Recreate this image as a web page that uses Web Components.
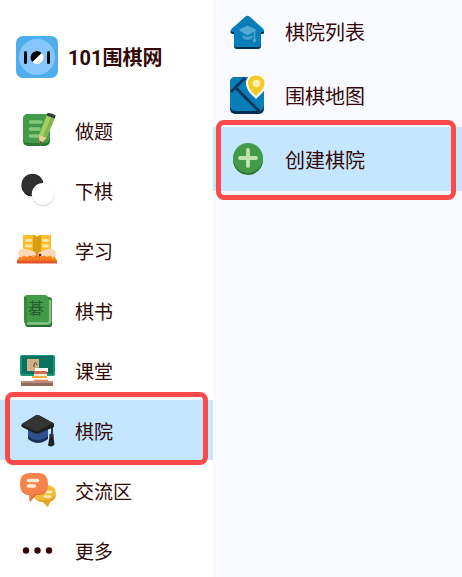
<!DOCTYPE html>
<html lang="zh-CN">
<head>
<meta charset="utf-8">
<meta name="viewport" content="width=device-width, initial-scale=1">
<title>101围棋网</title>
<style>
html, body { margin: 0; min-height: 100%; }
body { font-family: "Noto Sans CJK SC", sans-serif; color: #320808; background: #f9faff; overflow: hidden; }
</style>
</head>
<body>
<go-shell>
  <go-brand slot="side"></go-brand>
  <go-menu slot="side" label="主菜单">
    <go-item icon="practice">做题</go-item>
    <go-item icon="play">下棋</go-item>
    <go-item icon="study">学习</go-item>
    <go-item icon="book">棋书</go-item>
    <go-item icon="class">课堂</go-item>
    <go-item icon="academy" active>棋院</go-item>
    <go-item icon="chat">交流区</go-item>
    <go-item icon="more">更多</go-item>
  </go-menu>
  <go-menu class="sub" label="棋院" large>
    <go-item icon="house" large>棋院列表</go-item>
    <go-item icon="map" large>围棋地图</go-item>
    <go-item icon="add" large active>创建棋院</go-item>
  </go-menu>
</go-shell>

<script>
const icons = {
  logo: `<rect width="42" height="42" rx="7" fill="#4eaeed"/><circle cx="21" cy="21" r="18" fill="#86c6fa"/><rect x="8" y="15" width="3" height="13" rx="1.5" fill="#050505"/><rect x="31" y="15" width="3" height="13" rx="1.5" fill="#050505"/><circle cx="21" cy="21.500" r="6.500" fill="#fff"/><path d="M16.400 26.100A6.500 6.500 0 0 1 25.600 16.900Z" fill="#050505"/>`,
  practice: `<rect x="6" y="4" width="27" height="32" rx="5" fill="#26792f"/><rect x="6" y="4" width="27" height="29" rx="5" fill="#439b4a"/><path d="M13.500 12H24M13.500 19H22M13.500 26H21" stroke="#86c77a" stroke-width="3.600" stroke-linecap="round"/><path d="M30 4.500 38 7.500 29.500 28 23 34.500 22 25Z" fill="#a5ce66"/><path d="M34.500 6 38 7.500 29.500 28 26 26.500Z" fill="#83b64c"/><path d="M22 25 29.500 28 23 34.500Z" fill="#edc99a"/><path d="M22.600 31 25.600 32 23 34.500Z" fill="#6f4630"/><path d="M29.500 5.500 30.500 3Q35 2.500 38.700 5.500L37.800 8.500Z" fill="#314035"/>`,
  play: `<circle cx="15.500" cy="15.500" r="11" fill="#151515"/><circle cx="15.500" cy="14.500" r="10.800" fill="#303030"/><circle cx="26" cy="25" r="11.300" fill="#d8d8da"/><circle cx="26" cy="24" r="11.100" fill="#fff"/>`,
  study: `<path d="M6 5H17Q19 5 20 7Q21 5 23 5H34V27H6Z" fill="#fabd2c"/><path d="M16 5Q19 5 20 7Q21 5 24 5V22L20 24 16 22Z" fill="#d99c12"/><path d="M9.500 10.500H13.500M9.500 16H13.500M26.500 10.500H30.500M26.500 16H30.500" stroke="#ffe9a6" stroke-width="2.800" stroke-linecap="round"/><path d="M4 23H36L40 31H0Z" fill="#ff8517"/><path d="M0 30.500H40V33.500H0Z" fill="#e4552b"/><path d="M9 27H31M6 29H34" stroke="#ee671f" stroke-width="1" stroke-dasharray="2 1"/><path d="M1 22Q4 18 9 19L17 21.500Q20 24 18.500 26L15 24.500 17 27 13 25.500 10 27 7 25.500 4 28 1 25Z" fill="#fbd9b9"/><path d="M39 22Q36 18 31 19L24 21.500Q20 23 21.500 26L25 24.500 23 27 27 25.500 30 27 33 25.500 36 28 39 25Z" fill="#fbd9b9"/><circle cx="23" cy="25" r="1.300" fill="#502a1c"/>`,
  book: `<rect x="8" y="7" width="27" height="30" rx="3" fill="#358b3c"/><path d="M33 10V31Q33 33.500 30 33.500H10" fill="none" stroke="#8ac385" stroke-width="2.500"/><path d="M10 37H32Q35 37 35 34V32Q35 35 32 35H10Z" fill="#246f2c"/><rect x="7" y="5" width="24" height="27" rx="3" fill="#439b4a"/><path d="M8.500 7V33" stroke="#328839" stroke-width="2.500"/><text x="11" y="24" font-family="Noto Sans CJK SC, sans-serif" font-size="16" fill="#225f2b">碁</text>`,
  class: `<rect x="3" y="5" width="35" height="21" rx="2" fill="#159879"/><rect x="5" y="6" width="31" height="18" fill="#08725f"/><rect x="10" y="9" width="12" height="12" fill="#d8b68b"/><path d="M10 12H22M10 15H22M10 18H22M14 9V21M18 9V21" stroke="#c4a276" stroke-width=".6"/><path d="M17 17V14Q19 11 20 15" stroke="#444" fill="none"/><rect x="18" y="18" width="13" height="4" fill="#fff"/><rect x="17" y="21" width="13" height="3" fill="#d66a50"/><path d="M17 24H30V27H17Z" fill="#fff0cd"/><rect x="15" y="26" width="15" height="2" fill="#ecaf3e"/><path d="M16 28H31V31H16Z" fill="#fff8ed"/><path d="M17 30.500H31" stroke="#e8825d" stroke-width="1.500"/><rect x="4" y="31" width="32" height="2" fill="#b78e79"/><rect x="4" y="33" width="32" height="3" fill="#8f6b5c"/>`,
  academy: `<path d="M11 18H31V29Q21 37 11 29Z" fill="#1d315d"/><path d="M11 18H31V26Q21 34 11 26Z" fill="#2f5090"/><path d="M4 15 18.500 5.500Q20.500 4.500 22.500 5.500L37 13.500V17L23 23Q19 25 15 22L5 17Z" fill="#1d1d1e"/><path d="M4.500 14 18.500 5.500Q20.500 4.500 22.500 5.500L36 13 22 20.500Q19 22 16 20Z" fill="#343435"/><path d="M35 14V29" stroke="#262626" stroke-width="1.800"/><circle cx="34.500" cy="26" r="2.400" fill="#343435"/><path d="M32.500 27H36.500L37.500 34.500Q35 38 31 35.500Z" fill="#222"/>`,
  chat: `<path d="M28 15Q39 15 39 24Q39 30 33 32L31 37 26 32Q17 31 17 26Z" fill="#f4bb37"/><path d="M39 25Q38 30 33 32L31 37 26 32Q21 32 19 29Q31 33 39 25Z" fill="#dda529"/><path d="M29 22H34M28 26.500H33" stroke="#ffebc3" stroke-width="2.500" stroke-linecap="round"/><path d="M13 3H21Q31 3 31 14Q31 25 21 25H19L13 32 12 25Q3 24 3 14Q3 3 13 3Z" fill="#f6834b"/><path d="M3 17Q5 24 12 24L13 29 18 24H22Q28 24 31 17Q29 25 21 25H19L13 32 12 25Q4 24 3 17Z" fill="#e26d3c"/><path d="M11.500 10.500H20.500M11.500 16H17.500" stroke="#ffead6" stroke-width="3.600" stroke-linecap="round"/>`,
  more: `<g fill="#320808"><circle cx="9" cy="20.500" r="3.200"/><circle cx="20.500" cy="20.500" r="3.200"/><circle cx="32" cy="20.500" r="3.200"/></g>`,
  house: `<path d="M18 4 34 18Q37 22 32 22V34Q32 37 29 37H8Q5 37 5 34V22Q0 22 2 18Z" fill="#052f50"/><path d="M16.500 4.500Q18.500 3 20.500 4.500L34 16.500Q37 20 32 20V32Q32 35 29 35H8Q5 35 5 32V20Q0 20 3 16.500Z" fill="#087eb9"/><path d="M11 18 18.500 14.500 26 18 18.500 22.500Z" fill="#55a9d1" stroke="#55a9d1" stroke-width="1.500" stroke-linejoin="round"/><path d="M13.500 23Q18.500 26 23.500 23V26Q18.500 30 13.500 26Z" fill="#45a0cc"/><path d="M25.500 18V28" stroke="#55a9d1" stroke-width="1.500"/><circle cx="25.500" cy="28.500" r="1.700" fill="#55a9d1"/>`,
  map: `<rect x="1" y="1" width="34" height="37" rx="5" fill="#052f50"/><rect x="1" y="1" width="34" height="34" rx="5" fill="#087eb9"/><path d="M2 16 16 2M7 12 30 35" stroke="#05365e" stroke-width="3"/><path d="M27-2C34-2 37 3 37 8Q37 13 33 17L27 23 21 17Q17 12 17 7C17 2 21-2 27-2Z" fill="#fff"/><path d="M27-.500C33-.500 35.500 4 35.500 7Q35.500 12 31 16L27 20 23 16Q19 12 19 7C19 3 22-.500 27-.500Z" fill="#f6c928"/><circle cx="27.500" cy="7.500" r="3.700" fill="#fff3b2"/>`,
  add: `<circle cx="19" cy="20" r="15" fill="#2b7431"/><circle cx="19" cy="18" r="15" fill="#439b4a"/><path d="M19 10V26M11 18H27" stroke="#c1e4ae" stroke-width="3.800" stroke-linecap="round"/>`
};

class GoShell extends HTMLElement {
  constructor() {
    super();
    this.attachShadow({ mode: "open" }).innerHTML = `
      <style>
        :host { display: grid; grid-template-columns: 213px minmax(0, 1fr); min-height: 100vh; }
        aside { background: #fff; }
        main { background: #f9faff; }
      </style>
      <aside><slot name="side"></slot></aside>
      <main><slot></slot></main>`;
  }
}

class GoBrand extends HTMLElement {
  constructor() {
    super();
    this.attachShadow({ mode: "open" }).innerHTML = `
      <style>
        :host { display: block; padding: 36px 0 22px 16px; }
        a { display: flex; align-items: center; gap: 10px; color: inherit; text-decoration: none; font-size: 20px; line-height: 28px; font-weight: 700; white-space: nowrap; }
        svg { width: 42px; height: 42px; flex: none; }
        .num { font-family: Roboto, "Noto Sans CJK SC", sans-serif; }
      </style>
      <a href="#home"><svg viewBox="0 0 42 42" aria-hidden="true">${icons.logo}</svg><span><span class="num">101</span>围棋网</span></a>`;
  }
}

class GoMenu extends HTMLElement {
  constructor() {
    super();
    this.attachShadow({ mode: "open" }).innerHTML = `
      <style>
        :host { display: block; }
        :host([large]) { margin-top: -1px; }
        nav { display: flex; flex-direction: column; }
      </style>
      <nav><slot></slot></nav>`;
  }
  connectedCallback() {
    this.shadowRoot.querySelector("nav").setAttribute("aria-label", this.getAttribute("label"));
  }
}

class GoItem extends HTMLElement {
  constructor() {
    super();
    this.attachShadow({ mode: "open" });
  }
  connectedCallback() {
    this.shadowRoot.innerHTML = `
      <style>
        :host { display: block; position: relative; }
        a { display: flex; align-items: center; box-sizing: border-box; gap: 18px; height: 60px; padding-left: 17px; color: inherit; text-decoration: none; font-size: 19px; line-height: 28px; font-weight: 400; white-space: nowrap; }
        span { padding-top: 2px; }
        svg { width: 40px; height: 40px; flex: none; overflow: visible; }
        :host([large]) a { height: 64px; padding: 2px 0 0 16px; gap: 16px; font-size: 20px; }
        :host([large]) span { padding-top: 0; }
        :host([active]) a { background: #c4e6ff; }
        .frame { display: none; }
        :host([active]) .frame { display: block; position: absolute; inset: -8px 5px -5px; border: 5px solid #f94b49; border-radius: 8px; pointer-events: none; z-index: 1; }
        :host([large][active]) .frame { inset: -7px 6px -9px 3px; }
      </style>
      <a href="#${this.getAttribute("icon")}"><svg viewBox="0 0 40 40" aria-hidden="true">${icons[this.getAttribute("icon")]}</svg><span><slot></slot></span></a>
      <div class="frame"></div>`;
    if (this.hasAttribute("active")) this.shadowRoot.querySelector("a").setAttribute("aria-current", "page");
  }
}

customElements.define("go-shell", GoShell);
customElements.define("go-brand", GoBrand);
customElements.define("go-menu", GoMenu);
customElements.define("go-item", GoItem);
</script>
</body>
</html>
